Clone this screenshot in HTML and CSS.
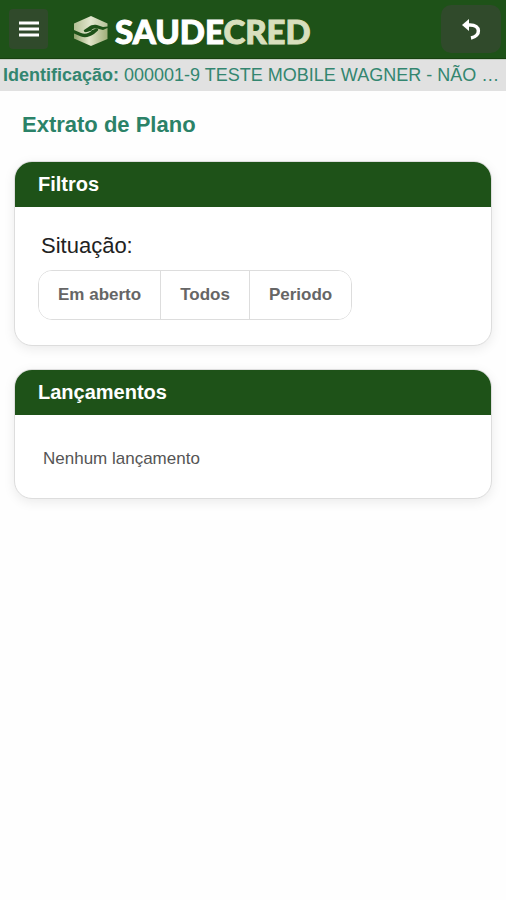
FILE: index.html
```html
<!DOCTYPE html>
<html lang="pt-BR">
<head>
<meta charset="utf-8">
<meta name="viewport" content="width=device-width, initial-scale=1">
<title>Extrato de Plano</title>
<link rel="stylesheet" href="styles.css">
</head>
<body>
<header class="topbar">
  <button class="menu-button" type="button" aria-label="Menu">
    <svg width="22" height="18" viewBox="0 0 22 18" aria-hidden="true"><path d="M1 3h20M1 9h20M1 15h20" stroke="#fff" stroke-width="3"/></svg>
  </button>
  <div class="brand">
    <svg class="brand-mark" width="36" height="32" viewBox="0 0 36 32" aria-hidden="true">
      <defs>
        <linearGradient id="upper" x1="0" y1="0" x2="1" y2="0"><stop offset="0" stop-color="#b3c094"/><stop offset=".5" stop-color="#e2e7cf"/><stop offset="1" stop-color="#b5c298"/></linearGradient>
        <linearGradient id="lower" x1="0" y1="0" x2="1" y2="0"><stop offset="0" stop-color="#8fa36b"/><stop offset=".45" stop-color="#e3e6cb"/><stop offset="1" stop-color="#a0af7a"/></linearGradient>
      </defs>
      <path fill="url(#upper)" d="M1 8.500 18 1l16.500 7.500v3L30 12l-6-2c-3-.8-6 0-8.500 2l-4.500 3c-1 1.500 1 2.500 3 2l5-1.500c-3 3-7 4-11 2.500L1 15z"/>
      <path fill="url(#lower)" d="M34.500 13v11L18 31 1 23.500v-5l7 3c4 1.500 9 .5 13-2.500l4-3.500c1-1.500-1-2.500-3-1.500l-4 1.500c2-2 5-3 8-1.500l4 1z"/>
    </svg>
    <span class="brand-name">SAUDE<span class="brand-accent">CRED</span></span>
  </div>
  <button class="back-button" type="button" aria-label="Voltar">
    <svg width="22" height="24" viewBox="0 0 22 24" aria-hidden="true"><path d="M2 8 9 2v12z" fill="#fff"/><path d="M7 8h3c11 0 11 11 1 13" fill="none" stroke="#fff" stroke-width="3.500"/></svg>
  </button>
</header>
<p class="identity"><strong>Identificação:</strong> 000001-9 TESTE MOBILE WAGNER - NÃO …</p>
<main class="content">
  <h1 class="title">Extrato de Plano</h1>
  <section class="card">
    <h2 class="card-header">Filtros</h2>
    <fieldset class="filters">
      <legend class="filter-label">Situação:</legend>
      <div class="segments">
        <button class="segment" type="button">Em aberto</button>
        <button class="segment" type="button">Todos</button>
        <button class="segment" type="button">Periodo</button>
      </div>
    </fieldset>
  </section>
  <section class="card">
    <h2 class="card-header">Lançamentos</h2>
    <p class="empty">Nenhum lançamento</p>
  </section>
</main>
</body>
</html>
```
FILE: styles.css
```css
* {
  box-sizing: border-box;
}

body {
  margin: 0;
  background: #fefefe;
  color: #333;
  font-family: "Liberation Sans", Arial, sans-serif;
}

h1, h2, p {
  margin: 0;
}

button {
  font: inherit;
  cursor: pointer;
}

.topbar {
  display: flex;
  align-items: center;
  height: 59px;
  padding: 0 5px 0 9px;
  background: #1e5218;
  border-bottom: 1px solid #17400f;
}

.menu-button,
.back-button {
  display: flex;
  align-items: center;
  justify-content: center;
  padding: 0;
  border: 0;
  background: #304a2b;
}

.menu-button {
  width: 39px;
  height: 40px;
  border-radius: 4px;
}

.back-button {
  width: 60px;
  height: 48px;
  margin-left: auto;
  border-radius: 10px;
}

.brand {
  display: flex;
  align-items: center;
  gap: 6px;
  margin-left: 25px;
  padding-top: 4px;
}

.brand-name {
  color: #fff;
  font-family: Lato, sans-serif;
  font-size: 33px;
  font-weight: 900;
  line-height: 34px;
  -webkit-text-stroke: 1px currentColor;
}

.brand-accent {
  color: #d8dfbd;
}

.identity {
  padding: 0 3px;
  overflow: hidden;
  background: #e1e1e1;
  color: #338670;
  border-top: 1px solid #c5cec3;
  font-size: 18px;
  line-height: 31px;
  white-space: nowrap;
  text-overflow: ellipsis;
}

.content {
  padding: 18px 14px;
}

.title {
  padding-left: 8px;
  color: #2b8268;
  font-size: 22px;
  line-height: 32px;
}

.card {
  margin-top: 20px;
  overflow: hidden;
  background: #fff;
  border: 1px solid #ddd;
  border-radius: 18px;
  box-shadow: 0 3px 12px rgba(0, 0, 0, .08);
}

.card + .card {
  margin-top: 23px;
}

.card-header {
  padding: 0 23px;
  background: #1e5218;
  color: #fff;
  font-size: 20px;
  line-height: 45px;
}

.filters {
  margin: 0;
  padding: 25px 23px;
  border: 0;
}

.filter-label {
  float: left;
  width: 100%;
  padding: 0 3px;
  color: #222;
  font-size: 22px;
  line-height: 28px;
}

.segments {
  display: inline-flex;
  clear: both;
  margin-top: 10px;
  border: 1px solid #ddd;
  border-radius: 14px;
  overflow: hidden;
}

.segment {
  padding: 0 19px;
  border: 0;
  background: #fff;
  color: #666;
  font-size: 17px;
  font-weight: bold;
  line-height: 48px;
}

.segment + .segment {
  border-left: 1px solid #ddd;
}

.empty {
  padding: 32px 28px 27px;
  color: #555;
  font-size: 17px;
  line-height: 24px;
}
```
